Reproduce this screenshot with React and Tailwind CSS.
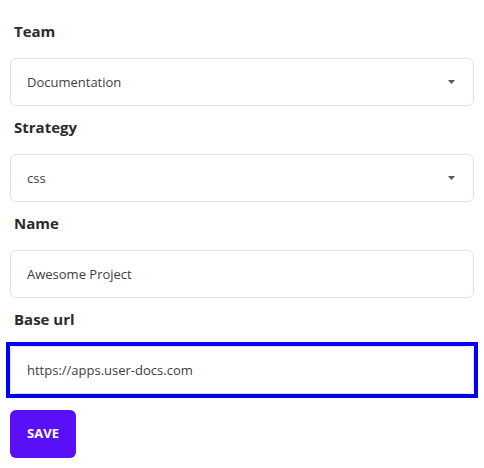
import { useState } from 'react';

const fieldBox = 'flex h-12 w-full items-center rounded-md border border-[#e2e2e2] bg-white px-4 text-[13px] text-[#404040] outline-none';

function Caret() {
  return (
    <svg width="7" height="4" viewBox="0 0 7 4" className="ml-auto mr-[2px]">
      <path d="M0 0h7L3.5 4z" fill="#555" />
    </svg>
  );
}

function Label({ children }) {
  return <div className="mb-4 pl-1 text-[15px] leading-[22px] font-bold text-[#2b2b2b]">{children}</div>;
}

function SelectField({ label, value }) {
  return (
    <div>
      <Label>{label}</Label>
      <div className={fieldBox}>
        <span className="pt-px">{value}</span>
        <Caret />
      </div>
    </div>
  );
}

function TextField({ label, value, onChange, focused }) {
  return (
    <div>
      <Label>{label}</Label>
      <div className={focused ? 'outline-4 outline-solid outline-[#0000f5]' : ''}>
        <input className={fieldBox} value={value} onChange={e => onChange(e.target.value)} />
      </div>
    </div>
  );
}

export default function App() {
  const [name, setName] = useState('Awesome Project');
  const [baseUrl, setBaseUrl] = useState('https://apps.user-docs.com');

  return (
    <div className="flex flex-col gap-[10px] bg-white px-[10px] pt-5" style={{ fontFamily: '"Open Sans", sans-serif' }}>
      <SelectField label="Team" value="Documentation" />
      <SelectField label="Strategy" value="css" />
      <TextField label="Name" value={name} onChange={setName} />
      <TextField label="Base url" value={baseUrl} onChange={setBaseUrl} focused />
      <div className="pt-[6px]">
        <button type="button" className="h-12 w-[66px] rounded-md bg-[#5a10f6] text-[13px] font-bold text-white">
          SAVE
        </button>
      </div>
    </div>
  );
}
